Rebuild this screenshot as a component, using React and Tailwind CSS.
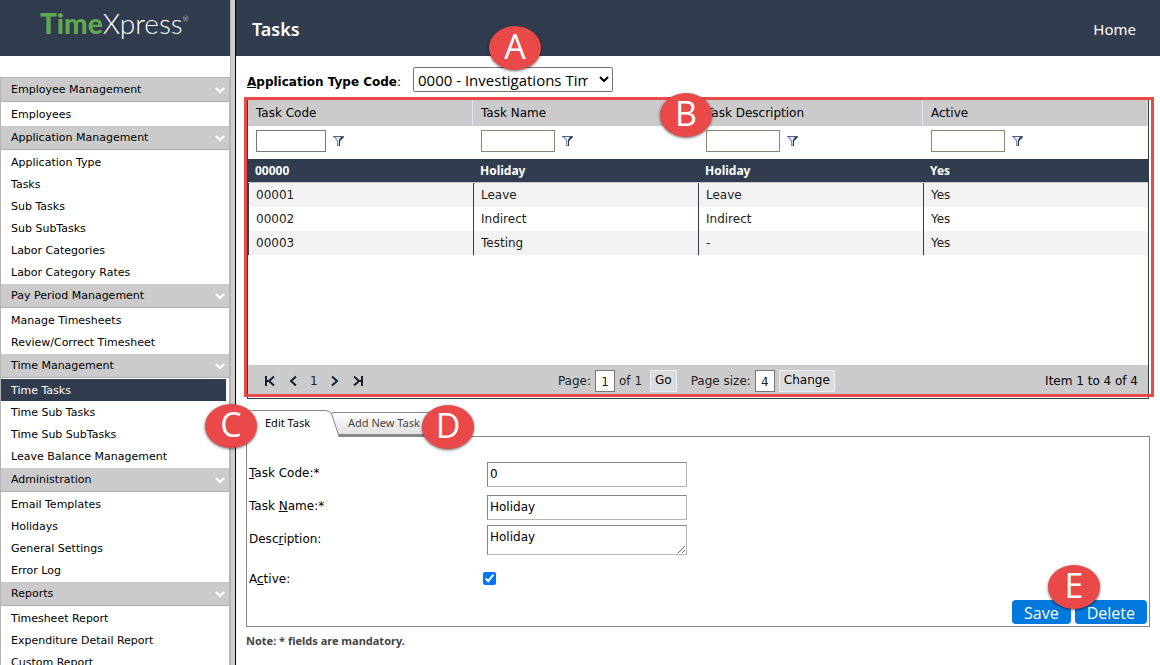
import { useState } from 'react';
import { clsx } from 'clsx';

const menu = [
  { title: 'Employee Management', items: ['Employees'] },
  {
    title: 'Application Management',
    items: ['Application Type', 'Tasks', 'Sub Tasks', 'Sub SubTasks', 'Labor Categories', 'Labor Category Rates']
  },
  { title: 'Pay Period Management', items: ['Manage Timesheets', 'Review/Correct Timesheet'] },
  { title: 'Time Management', items: ['Time Tasks', 'Time Sub Tasks', 'Time Sub SubTasks', 'Leave Balance Management'] },
  { title: 'Administration', items: ['Email Templates', 'Holidays', 'General Settings', 'Error Log'] },
  { title: 'Reports', items: ['Timesheet Report', 'Expenditure Detail Report', 'Custom Report'] }
];

const columns = ['Task Code', 'Task Name', 'Task Description', 'Active'];

const tasks = [
  ['00000', 'Holiday', 'Holiday', 'Yes'],
  ['00001', 'Leave', 'Leave', 'Yes'],
  ['00002', 'Indirect', 'Indirect', 'Yes'],
  ['00003', 'Testing', '-', 'Yes']
];

function Badge({ children, className }) {
  return (
    <span
      className={clsx(
        "absolute z-10 flex h-11 w-[52px] items-center justify-center rounded-[50%] bg-[#e94949] pb-1 font-['Open_Sans',sans-serif] text-[34px] leading-10 text-white shadow-[0_1px_3px_rgba(0,0,0,0.6)]",
        className
      )}
    >
      {children}
    </span>
  );
}

function Chevron() {
  return (
    <svg width="10" height="7" viewBox="0 0 10 7" fill="none" stroke="#fff" strokeWidth="2.2" aria-hidden="true">
      <path d="M1 1l4 4 4-4" />
    </svg>
  );
}

function Funnel() {
  return (
    <svg width="11" height="10" viewBox="0 0 11 10" aria-hidden="true">
      <path d="M0 0h11L7 5v5H4V5z" fill="#7d90aa" />
      <path d="M2.500 1h5L5.800 4.500V9H5V4.500z" fill="#e6eef8" />
      <path d="M8.500 1H11L7 5v5H6V4.500z" fill="#1d2f4b" />
      <path d="M0 .5h11" stroke="#52647e" />
    </svg>
  );
}

function PagerIcon({ path, label }) {
  return (
    <button type="button" aria-label={label} className="flex h-5 w-3 items-center justify-center">
      <svg width="12" height="12" viewBox="0 0 12 12" fill="none" stroke="#17212e" strokeWidth="2">
        <path d={path} />
      </svg>
    </button>
  );
}

function Logo() {
  return (
    <a href="#" className="ml-10 mt-[7px] flex font-['Lato',sans-serif] text-[28px] leading-8">
      <span className="font-black text-[#61a950]">Time</span>
      <span className="font-light text-white">Xpress</span>
      <span className="mt-1 text-[7px] font-light leading-4 text-white">®</span>
    </a>
  );
}

function Sidebar() {
  return (
    <aside className="flex w-[230px] shrink-0 flex-col">
      <div className="flex h-14 shrink-0 items-start bg-[#313d4f]">
        <Logo />
      </div>
      <nav className="mt-[21px] border border-b-0 border-[#b5b5b5] text-[11px]">
        {menu.map((group) => (
          <section key={group.title} className="pb-px">
            <button
              type="button"
              className="mb-px flex h-6 w-full items-center justify-between border-b border-[#b0b0b0] bg-[#cbcbcb] pl-2.5 pr-1 pt-px text-left"
            >
              {group.title}
              <Chevron />
            </button>
            <ul>
              {group.items.map((item) => (
                <li key={item}>
                  <a
                    href="#"
                    className={clsx(
                      'mr-[3px] block h-[22px] pl-2.5 pt-px leading-[22px]',
                      item === 'Time Tasks' && 'bg-[#313d4f] text-white'
                    )}
                  >
                    {item}
                  </a>
                </li>
              ))}
            </ul>
          </section>
        ))}
      </nav>
    </aside>
  );
}

function TaskGrid() {
  return (
    <div className="relative ml-[11px] mr-[11px] mt-1.5 flex min-h-[301px] flex-col border border-[#2f3d4f]">
      <table className="w-full table-fixed border-separate border-spacing-0">
        <thead>
          <tr className="h-[27px] bg-[#cbcbcb]">
            {columns.map((column) => (
              <th key={column} scope="col" className="border-r border-[#d8e4f4] p-0 pl-2 text-left font-normal">
                {column}
              </th>
            ))}
          </tr>
          <tr className="h-[33px]">
            {columns.map((column, i) => (
              <td key={column} className="p-0 pl-2 pt-1 align-top">
                <div className="flex items-center gap-[7px]">
                  <input
                    aria-label={`Filter ${column}`}
                    className={clsx('h-[22px] border bg-white px-1', i === 0 ? 'w-[70px] border-[#777]' : 'w-[74px] border-[#8a8672]')}
                  />
                  <button type="button" aria-label={`Filter by ${column}`}>
                    <Funnel />
                  </button>
                </div>
              </td>
            ))}
          </tr>
        </thead>
        <tbody>
          {tasks.map((row, i) => (
            <tr
              key={row[0]}
              className={clsx(
                'h-6',
                i === 0 ? "bg-[#313d4f] font-['Noto_Sans',sans-serif] font-bold text-white" : 'text-[#222]',
                i % 2 === 1 && 'bg-[#f2f2f2]'
              )}
            >
              {row.map((cell, j) => (
                <td
                  key={j}
                  className={clsx('p-0 pl-[7px] leading-5', i === 0 ? 'border-b border-[#c9c9c9]' : 'border-l border-[#2f3d4f]')}
                >
                  {cell}
                </td>
              ))}
            </tr>
          ))}
        </tbody>
      </table>
      <div className="mb-[3px] mt-auto flex h-[30px] items-center bg-[#cbcbcb] pl-4 pr-2.5 pt-px text-[#222]">
        <div className="flex items-center gap-[11px]">
          <PagerIcon label="First page" path="M2 1v10M10 1.500L5 6l5 4.500M3 6h3" />
          <PagerIcon label="Previous page" path="M9 1.500L4 6l5 4.500" />
          <span>1</span>
          <PagerIcon label="Next page" path="M3 1.500L8 6l-5 4.500" />
          <PagerIcon label="Last page" path="M10 1v10M2 1.500L7 6l-5 4.500M6 6h3" />
        </div>
        <div className="mx-auto flex items-center gap-1 pr-4">
          <label htmlFor="page">Page:</label>
          <input id="page" defaultValue="1" className="h-[22px] w-5 border border-[#777] bg-white pt-0.5 text-center" />
          <span>of 1</span>
          <button type="button" className="ml-1 h-[22px] border border-[#eaf0fa] bg-[#dcdcdc] px-1 pb-0.5 text-black">
            Go
          </button>
          <label htmlFor="size" className="ml-2.5">
            Page size:
          </label>
          <input id="size" defaultValue="4" className="h-[22px] w-5 border border-[#777] bg-white pt-0.5 text-center" />
          <button type="button" className="h-[22px] border border-[#eaf0fa] bg-[#dcdcdc] px-1 pb-0.5 text-black">
            Change
          </button>
        </div>
        <span className="text-black">Item 1 to 4 of 4</span>
      </div>
      <div className="pointer-events-none absolute -left-1 -right-1.5 -top-[2px] bottom-px border-3 border-[#e94949]" />
      <Badge className="-top-1.5 left-[412px]">B</Badge>
    </div>
  );
}

function Tabs() {
  return (
    <div className="relative ml-2.5 mt-2.5 flex h-[27px] items-end font-['Noto_Sans',sans-serif] text-[11px]">
      <button type="button" className="relative z-1 -mb-px h-[27px] w-[92px] text-left">
        <svg className="absolute inset-0" width="94" height="27" viewBox="0 0 94 27" aria-hidden="true">
          <path d="M.5 27V5.500Q.5.500 5.500.500H80Q84 .5 86 5L93 26.500V27" fill="#fff" stroke="#868686" />
        </svg>
        <span className="relative pl-[19px]">Edit Task</span>
      </button>
      <button type="button" className="-ml-2 h-6 w-[120px] rounded-t-sm border border-b-2 border-[#868686] bg-linear-to-b from-white to-[#e2e2e2] pl-[17px] text-left text-[#444]">
        Add New Task
      </button>
      <Badge className="-left-[41px] -top-[5px]">C</Badge>
      <Badge className="-top-1 left-44">D</Badge>
    </div>
  );
}

function TaskForm() {
  const [active, setActive] = useState(true);
  const field = 'h-[25px] w-[200px] border border-[#b5b5b5] border-l-[#868686] border-t-[#868686] px-0.5 pb-0.5 leading-4';

  return (
    <form onSubmit={(e) => e.preventDefault()} className="relative mx-2.5 h-[191px] border border-[#868686] pl-0.5 pt-[25px]">
      <div className="flex h-[33px]">
        <label htmlFor="code" className="w-[238px] pt-[3px]">
          <u>T</u>ask Code:*
        </label>
        <input id="code" defaultValue="0" className={field} />
      </div>
      <div className="flex h-[30px]">
        <label htmlFor="name" className="w-[238px] pt-[3px]">
          Task <u>N</u>ame:*
        </label>
        <input id="name" defaultValue="Holiday" className={field} />
      </div>
      <div className="flex h-[44px]">
        <label htmlFor="description" className="w-[238px] pt-1.5">
          Desc<u>r</u>iption:
        </label>
        <textarea
          id="description"
          defaultValue="Holiday"
          className="h-[30px] w-[200px] resize overflow-hidden border border-[#b5b5b5] border-l-[#868686] border-t-[#868686] px-0.5 pt-px leading-5"
        />
      </div>
      <div className="flex">
        <label htmlFor="active" className="w-[234px] pt-0.5">
          A<u>c</u>tive:
        </label>
        <input
          id="active"
          type="checkbox"
          checked={active}
          onChange={(e) => setActive(e.target.checked)}
          className="mt-[3px] size-[13px] accent-[#0075ff]"
        />
      </div>
      <div className="absolute bottom-0.5 right-0.5 flex gap-1 font-['Open_Sans',sans-serif] text-base leading-6">
        <button type="submit" className="h-6 rounded-sm bg-[#0078dc] px-3 pt-px leading-6 text-white">
          Save
        </button>
        <button type="button" className="h-6 rounded-sm bg-[#0078dc] px-3 pt-px leading-6 text-white">
          Delete
        </button>
        <Badge className="-top-[35px] left-9">E</Badge>
      </div>
    </form>
  );
}

export default function App() {
  return (
    <div className="flex h-screen overflow-hidden bg-white font-['DejaVu_Sans',Verdana,sans-serif] text-xs text-black">
      <Sidebar />
      <div className="w-1.5 shrink-0 border-l border-r border-l-[#b5b5b5] border-r-black bg-[#cfcfcf]" />
      <main className="flex min-w-0 flex-1 flex-col">
        <header className="flex h-14 shrink-0 items-center justify-between bg-[#313d4f] pl-4 pr-6 pt-px font-['Noto_Sans',sans-serif] text-white">
          <h1 className="text-lg font-semibold">Tasks</h1>
          <a href="#" className="text-[15px]">
            Home
          </a>
        </header>
        <div className="relative mt-[11px] flex h-[25px] shrink-0 items-center pl-[11px]">
          <label htmlFor="appType" className="w-[166px] pt-1">
            <b>
              <u>A</u>pplication Type Code
            </b>
            :
          </label>
          <select
            id="appType"
            className="h-[25px] w-[200px] rounded-xs border border-[#767676] bg-white pr-2 pt-px font-['Open_Sans',sans-serif] text-[15px] leading-5"
          >
            <option>0000 - Investigations Time</option>
          </select>
          <Badge className="-top-[41px] left-[253px]">A</Badge>
        </div>
        <TaskGrid />
        <Tabs />
        <TaskForm />
        <p className="ml-2.5 mt-1.5 font-['Noto_Sans',sans-serif] text-[11px] leading-4 font-bold text-[#444]">
          Note: * fields are mandatory.
        </p>
      </main>
    </div>
  );
}
